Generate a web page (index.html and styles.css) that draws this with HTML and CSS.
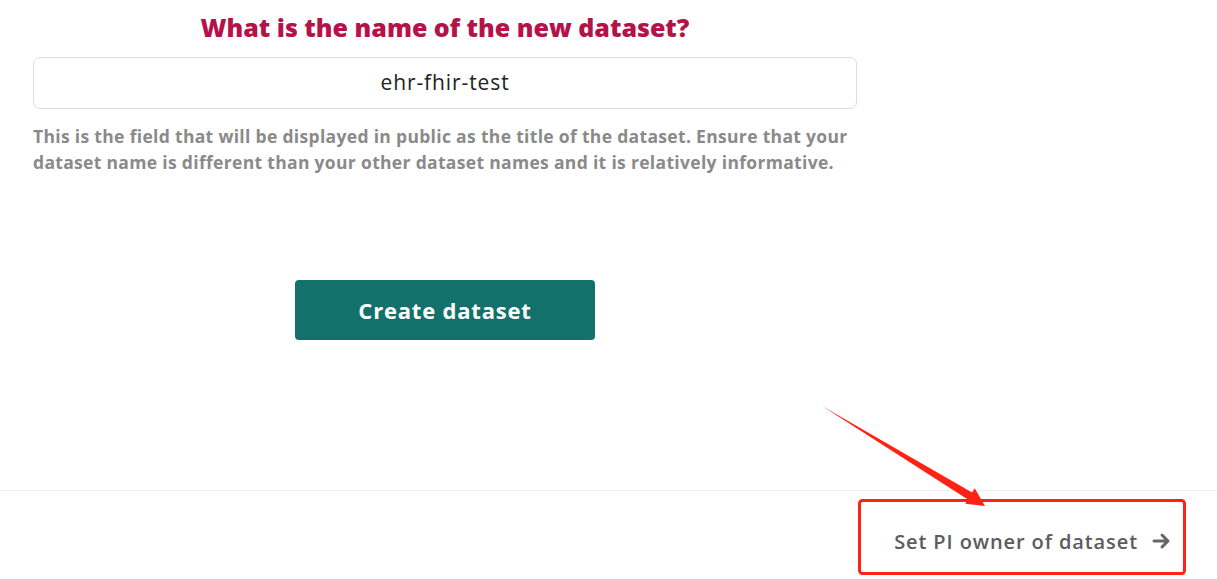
FILE: index.html
```html
<!DOCTYPE html>
<html>
<head>
<meta charset="utf-8">
<link rel="stylesheet" href="styles.css">
</head>
<body>
<div class="page">
  <main class="main">
    <h1 class="title">What is the name of the new dataset?</h1>
    <div class="field">ehr-fhir-test</div>
    <p class="help">This is the field that will be displayed in public as the title of the dataset. Ensure that your dataset name is different than your other dataset names and it is relatively informative.</p>
    <div class="actions"><button class="create">Create dataset</button></div>
  </main>
  <footer class="footer">
    <div class="next">
      <span class="next-label">Set PI owner of dataset</span>
      <svg class="next-arrow" width="20" height="18" viewBox="0 0 20 18"><path d="M2 9h14M10 3l6 6-6 6" fill="none" stroke="#666" stroke-width="3" stroke-linecap="round" stroke-linejoin="round"/></svg>
    </div>
  </footer>
  <svg class="annot" width="1217" height="579" viewBox="0 0 1217 579">
    <rect x="859.5" y="500.5" width="325" height="73" rx="3" fill="none" stroke="#ff2215" stroke-width="3"/>
    <path d="M822 406 L972.1 492.6 L974.7 488.3 L985 506 L965.3 503.7 L967.9 499.4 Z" fill="#ff2215"/>
  </svg>
</div>
</body>
</html>
```

FILE: styles.css
```css
* { box-sizing: border-box; }
html, body { margin: 0; padding: 0; background: #fff; }
body { font-family: "Open Sans", "Liberation Sans", sans-serif; }
.page { position: relative; width: 1217px; height: 579px; overflow: hidden; }
.main { width: 890px; padding: 0 33px; height: 490px; }
.title {
  margin: 0;
  padding-top: 10px;
  text-align: center;
  font-size: 25px;
  line-height: 34px;
  font-weight: 800;
  color: #b5124a;
}
.field {
  margin-top: 13px;
  height: 52px;
  border: 1px solid #dcdcdc;
  border-radius: 7px;
  display: flex;
  align-items: center;
  justify-content: center;
  font-size: 21px;
  letter-spacing: 0.9px;
  color: #222;
  padding-bottom: 2px;
}
.help {
  margin: 14px 0 0;
  font-size: 17.5px;
  letter-spacing: 0.32px;
  line-height: 26px;
  font-weight: 700;
  color: #8a8a8a;
}
.actions { display: flex; justify-content: center; margin-top: 105px; }
.create {
  width: 300px;
  height: 60px;
  border: 0;
  border-radius: 4px;
  background: #13716b;
  color: #fff;
  font-family: inherit;
  font-size: 22px;
  letter-spacing: 0.8px;
  font-weight: 700;
}
.footer {
  border-top: 1px solid #ececec;
  height: 89px;
  display: flex;
  justify-content: flex-end;
  align-items: center;
  padding-right: 45px;
}
.next { display: flex; align-items: center; gap: 14px; padding-top: 12px; }
.next-label { font-size: 20px; letter-spacing: 0.9px; font-weight: 600; color: #5c5c5c; }
.next-arrow { display: block; }
.annot { position: absolute; left: 0; top: 0; pointer-events: none; }
```
